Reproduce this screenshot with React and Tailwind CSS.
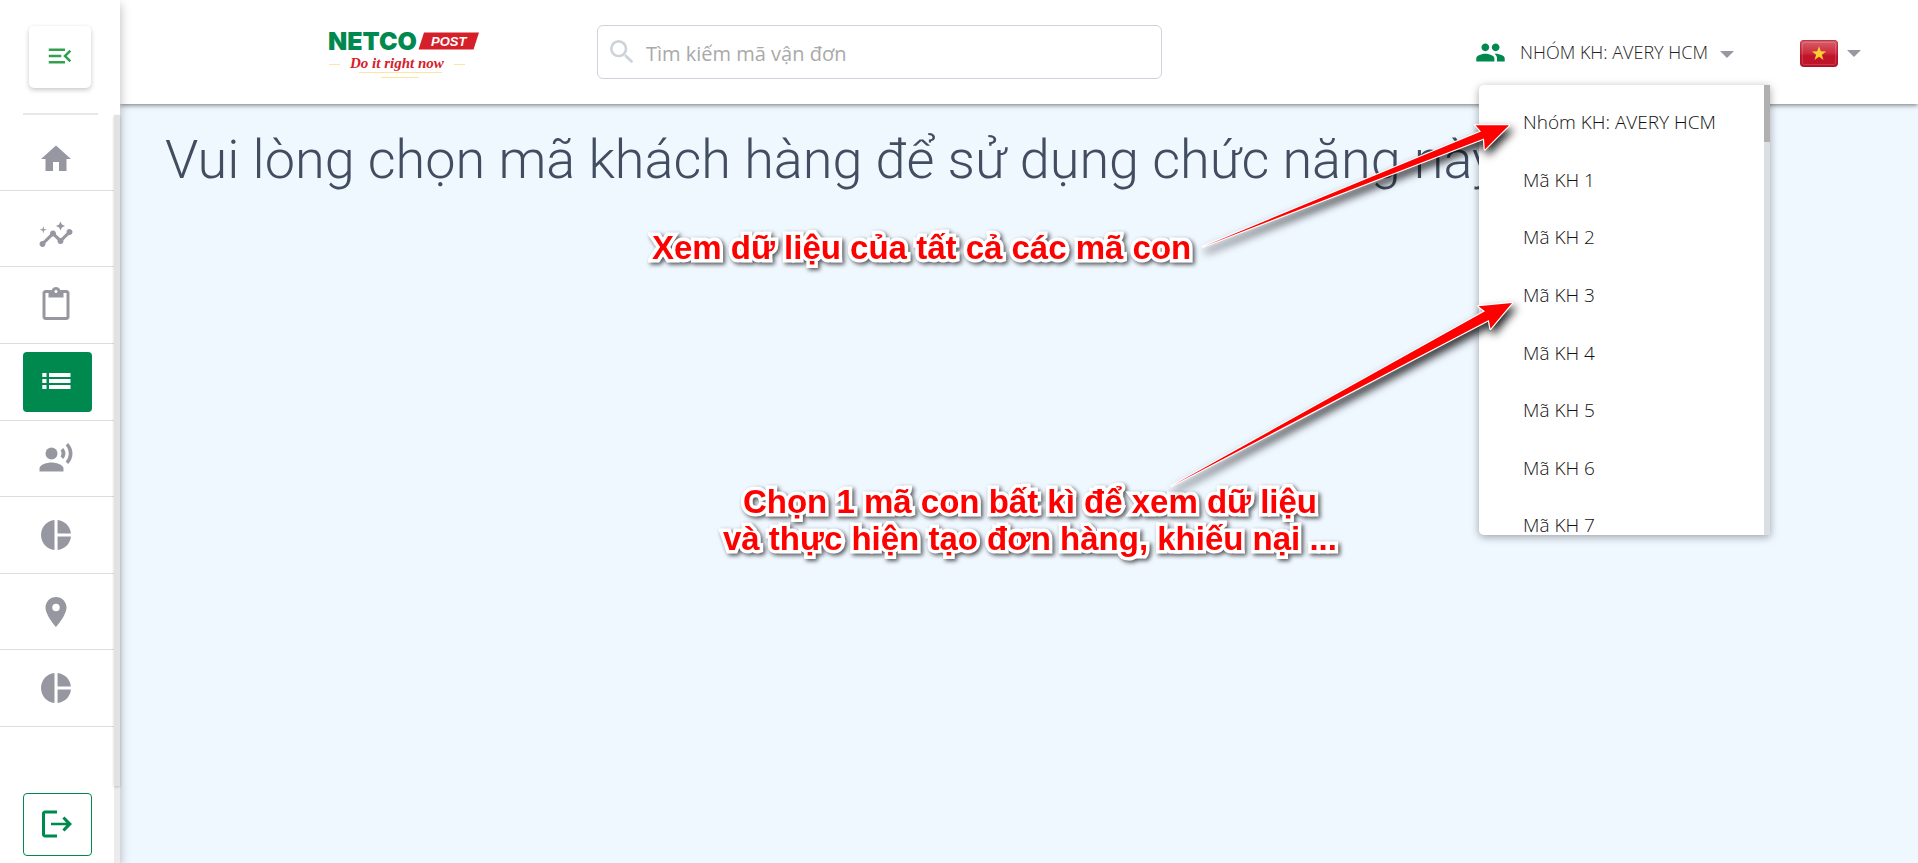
import React from "react";
import {
  MdMenuOpen,
  MdHome,
  MdInsights,
  MdContentPaste,
  MdRecordVoiceOver,
  MdPieChart,
  MdLocationOn,
  MdSearch,
  MdPeople,
} from "react-icons/md";

function ListIcon({ className }) {
  return (
    <svg viewBox="0 0 36 36" className={className} fill="currentColor" aria-hidden="true">
      {[9, 15, 21].map((y) => (
        <g key={y}>
          <rect x="4.300" y={y} width="4.200" height="4" />
          <rect x="11" y={y} width="21.500" height="4" />
        </g>
      ))}
    </svg>
  );
}

function LogoutIcon({ className }) {
  return (
    <svg viewBox="0 0 24 24" className={className} fill="currentColor" aria-hidden="true">
      <path d="M17 7l-1.41 1.41L18.17 11.1H8v1.8h10.17l-2.58 2.69L17 17l5-5zM4 5h8V3H4c-1.1 0-2 .9-2 2v14c0 1.1.9 2 2 2h8v-2H4V5z" />
    </svg>
  );
}

function Caret() {
  return (
    <svg viewBox="0 0 14 7" className="h-[7px] w-[14px] text-[#9898a3]" fill="currentColor" aria-hidden="true">
      <path d="M0 0h14L7 7z" />
    </svg>
  );
}

function Logo() {
  return (
    <svg viewBox="0 0 152 48" className="h-12 w-[152px] overflow-visible" role="img" aria-label="Netco Post">
      <text x="0" y="18" fontFamily="Inter, 'Liberation Sans', sans-serif" fontWeight="900" fontSize="25" fill="#00894f">
        NETCO
      </text>
      <path d="M96 0.500h55l-5.500 17h-55z" fill="#d5202a" />
      <text x="103" y="14" fontFamily="'Liberation Sans', sans-serif" fontWeight="700" fontStyle="italic" fontSize="13" fill="#fff">
        POST
      </text>
      <text x="22" y="36" fontFamily="'Liberation Serif', serif" fontWeight="700" fontStyle="italic" fontSize="15" fill="#d5202a">
        Do it right now
      </text>
      <path d="M1 32.500h11M126 32.500h11M31 40.500h83M53 45.500h38" stroke="#fbe7a1" strokeWidth="1" />
    </svg>
  );
}

function Flag() {
  return (
    <svg viewBox="0 0 38 27" className="h-[27px] w-[38px]" role="img" aria-label="Tiếng Việt">
      <defs>
        <linearGradient id="flag" x1="0" y1="0" x2="0" y2="1">
          <stop offset="0" stopColor="#d8606c" />
          <stop offset="0.5" stopColor="#cc2a3c" />
          <stop offset="0.6" stopColor="#c0142a" />
          <stop offset="1" stopColor="#c0142a" />
        </linearGradient>
      </defs>
      <rect width="38" height="27" rx="4" fill="#a5142a" />
      <rect x="0.500" y="0.500" width="37" height="25.500" rx="3.500" fill="url(#flag)" />
      <rect x="2.500" y="2.500" width="33" height="22" rx="2" fill="none" stroke="#fff" strokeOpacity="0.15" />
      <path
        d="M19 6.200l1.800 5.100 5.400.1-4.300 3.300 1.600 5.200-4.500-3.100-4.500 3.100 1.600-5.200-4.300-3.300 5.400-.1z"
        fill="#f8d030"
      />
    </svg>
  );
}

const navItems = [
  { label: "Trang chủ", Icon: MdHome, low: true },
  { label: "Thống kê", Icon: MdInsights, low: true },
  { label: "Tạo đơn", Icon: MdContentPaste },
  { label: "Danh sách", Icon: ListIcon, active: true },
  { label: "Khiếu nại", Icon: MdRecordVoiceOver },
  { label: "Báo cáo", Icon: MdPieChart },
  { label: "Tra cứu", Icon: MdLocationOn },
  { label: "Báo cáo khác", Icon: MdPieChart },
];

const customers = [
  "Nhóm KH: AVERY HCM",
  "Mã KH 1",
  "Mã KH 2",
  "Mã KH 3",
  "Mã KH 4",
  "Mã KH 5",
  "Mã KH 6",
  "Mã KH 7",
];

function Sidebar() {
  return (
    <aside className="relative z-20 flex w-[120px] shrink-0 flex-col bg-white shadow-[0_4px_10px_rgba(0,0,0,0.28)]">
      <div className="flex h-[115px] shrink-0 flex-col items-center justify-between pt-[26px]">
        <button
          type="button"
          aria-label="Mở menu"
          className="flex size-[62px] items-center justify-center rounded-[5px] bg-white pb-[2px] text-[#34a04f] shadow-[0_2px_5px_rgba(0,0,0,0.22)]"
        >
          <MdMenuOpen className="size-[30px]" />
        </button>
        <div className="h-[2px] w-[75px] bg-[#e8e8e8]" />
      </div>
      <div className="flex grow">
        <div className="-mt-px flex grow flex-col">
          <nav className="grid h-[613px] auto-rows-fr">
            {navItems.map(({ label, Icon, active, low }) => (
              <a
                key={label}
                href="#"
                aria-label={label}
                className={
                  "flex items-center border-b border-[#dcdde2] pl-[23px] text-[#9797a1] " + (low ? "pt-[14px]" : "")
                }
              >
                <span
                  className={
                    "flex h-[60px] w-[69px] items-center rounded-[4px] pl-[15px] " +
                    (active ? "bg-[#00894f] text-white" : "")
                  }
                >
                  <Icon className="size-9" />
                </span>
              </a>
            ))}
          </nav>
          <div className="mt-auto pb-[7px] pl-[23px]">
            <button
              type="button"
              aria-label="Đăng xuất"
              className="flex h-[63px] w-[69px] items-center rounded-[4px] border border-[#00894f] pb-[2px] pl-[15px] text-[#00894f]"
            >
              <LogoutIcon className="size-9" />
            </button>
          </div>
        </div>
        <div className="w-[6px] bg-[#ebebeb]">
          <div className="h-[671px] bg-[#e2e2e2] shadow-[0_1px_3px_rgba(0,0,0,0.2)]" />
        </div>
      </div>
    </aside>
  );
}

function Header() {
  return (
    <header className="relative z-10 flex h-[104px] items-start bg-white pr-[57px] pl-[208px] shadow-[0_1px_5px_rgba(0,0,0,0.55)]">
      <div className="pt-8">
        <Logo />
      </div>
      <div className="mt-[25px] ml-[117px] flex h-[54px] w-[565px] items-center gap-2 rounded-[6px] border border-[#cdd3dd] pl-[8px]">
        <MdSearch className="size-8 text-[#cdd3da]" />
        <input
          type="text"
          aria-label="Tìm kiếm mã vận đơn"
          placeholder="Tìm kiếm mã vận đơn"
          className="h-full min-w-0 grow pt-[3px] font-['Open_Sans',sans-serif] text-[20px] text-[#333] outline-none placeholder:text-[#a9a9a9]"
        />
      </div>
      <div className="ml-auto flex h-[104px] items-center gap-[66px]">
        <div className="relative">
          <button
            type="button"
            className="flex items-center font-['Open_Sans',sans-serif] text-[18px] font-light text-[#222]"
          >
            <MdPeople className="size-[31px] text-[#00894f]" />
            <span className="ml-[14px] w-[190px] text-left whitespace-nowrap">NHÓM KH: AVERY HCM</span>
            <span className="ml-[10px] pt-1">
              <Caret />
            </span>
          </button>
          <ul className="absolute top-[48px] left-[4px] h-[450px] w-[291px] overflow-hidden rounded-l-[5px] bg-white pt-[9px] shadow-[0_2px_8px_rgba(0,0,0,0.35)]">
            <div className="grid h-[461px] auto-rows-fr">
              {customers.map((name) => (
                <li key={name} className="flex">
                  <button
                    type="button"
                    className="grow pl-11 text-left font-['Open_Sans',sans-serif] text-[19px] font-light text-[#111]"
                  >
                    {name}
                  </button>
                </li>
              ))}
            </div>
            <li aria-hidden="true" className="absolute top-0 right-0 h-full w-[6px] bg-[#dadfe4]">
              <div className="h-[57px] bg-[#b0b0b0]" />
            </li>
          </ul>
        </div>
        <button type="button" aria-label="Ngôn ngữ" className="flex items-center gap-[9px] pt-[2px]">
          <Flag />
          <Caret />
        </button>
      </div>
    </header>
  );
}

function Note({ className, children }) {
  return (
    <p
      className={
        "absolute z-30 text-center font-['Liberation_Sans',sans-serif] text-[33px] leading-[37px] font-bold whitespace-nowrap text-[#ff0000] [paint-order:stroke_fill] [-webkit-text-stroke:7px_white] drop-shadow-[2px_2px_2px_rgba(0,0,0,0.65)] " +
        className
      }
    >
      {children}
    </p>
  );
}

function Arrows() {
  return (
    <svg
      viewBox="0 0 380 400"
      className="pointer-events-none absolute top-[100px] left-[1150px] z-30 h-[400px] w-[380px] drop-shadow-[3px_5px_4px_rgba(0,0,0,0.85)]"
      fill="#ff0000"
      stroke="#fff"
      strokeWidth="2.4"
      paintOrder="stroke"
      strokeLinejoin="round"
      aria-hidden="true"
    >
      <path d="M53 146.700L331 31.500L325.500 25.200L359 25.200L334.800 49.500L334 38.500Z" />
      <path d="M21.500 386L335 211.200L328.500 206.300L362 203L340.500 228.800L338.800 220Z" />
    </svg>
  );
}

export default function App() {
  return (
    <div className="relative flex min-h-screen overflow-hidden bg-[#eff7ff]">
      <Sidebar />
      <div className="flex min-w-0 grow flex-col">
        <Header />
        <main className="grow px-[45px] pt-6">
          <h1 className="font-['Roboto',sans-serif] text-[54px] leading-[64px] font-light whitespace-nowrap text-[#424e60]">
            Vui lòng chọn mã khách hàng để sử dụng chức năng này
          </h1>
        </main>
      </div>
      <Note className="top-[229px] left-[652px]">Xem dữ liệu của tất cả các mã con</Note>
      <Note className="top-[483px] left-[723px]">
        Chọn 1 mã con bất kì để xem dữ liệu
        <br />
        và thực hiện tạo đơn hàng, khiếu nại ...
      </Note>
      <Arrows />
    </div>
  );
}
